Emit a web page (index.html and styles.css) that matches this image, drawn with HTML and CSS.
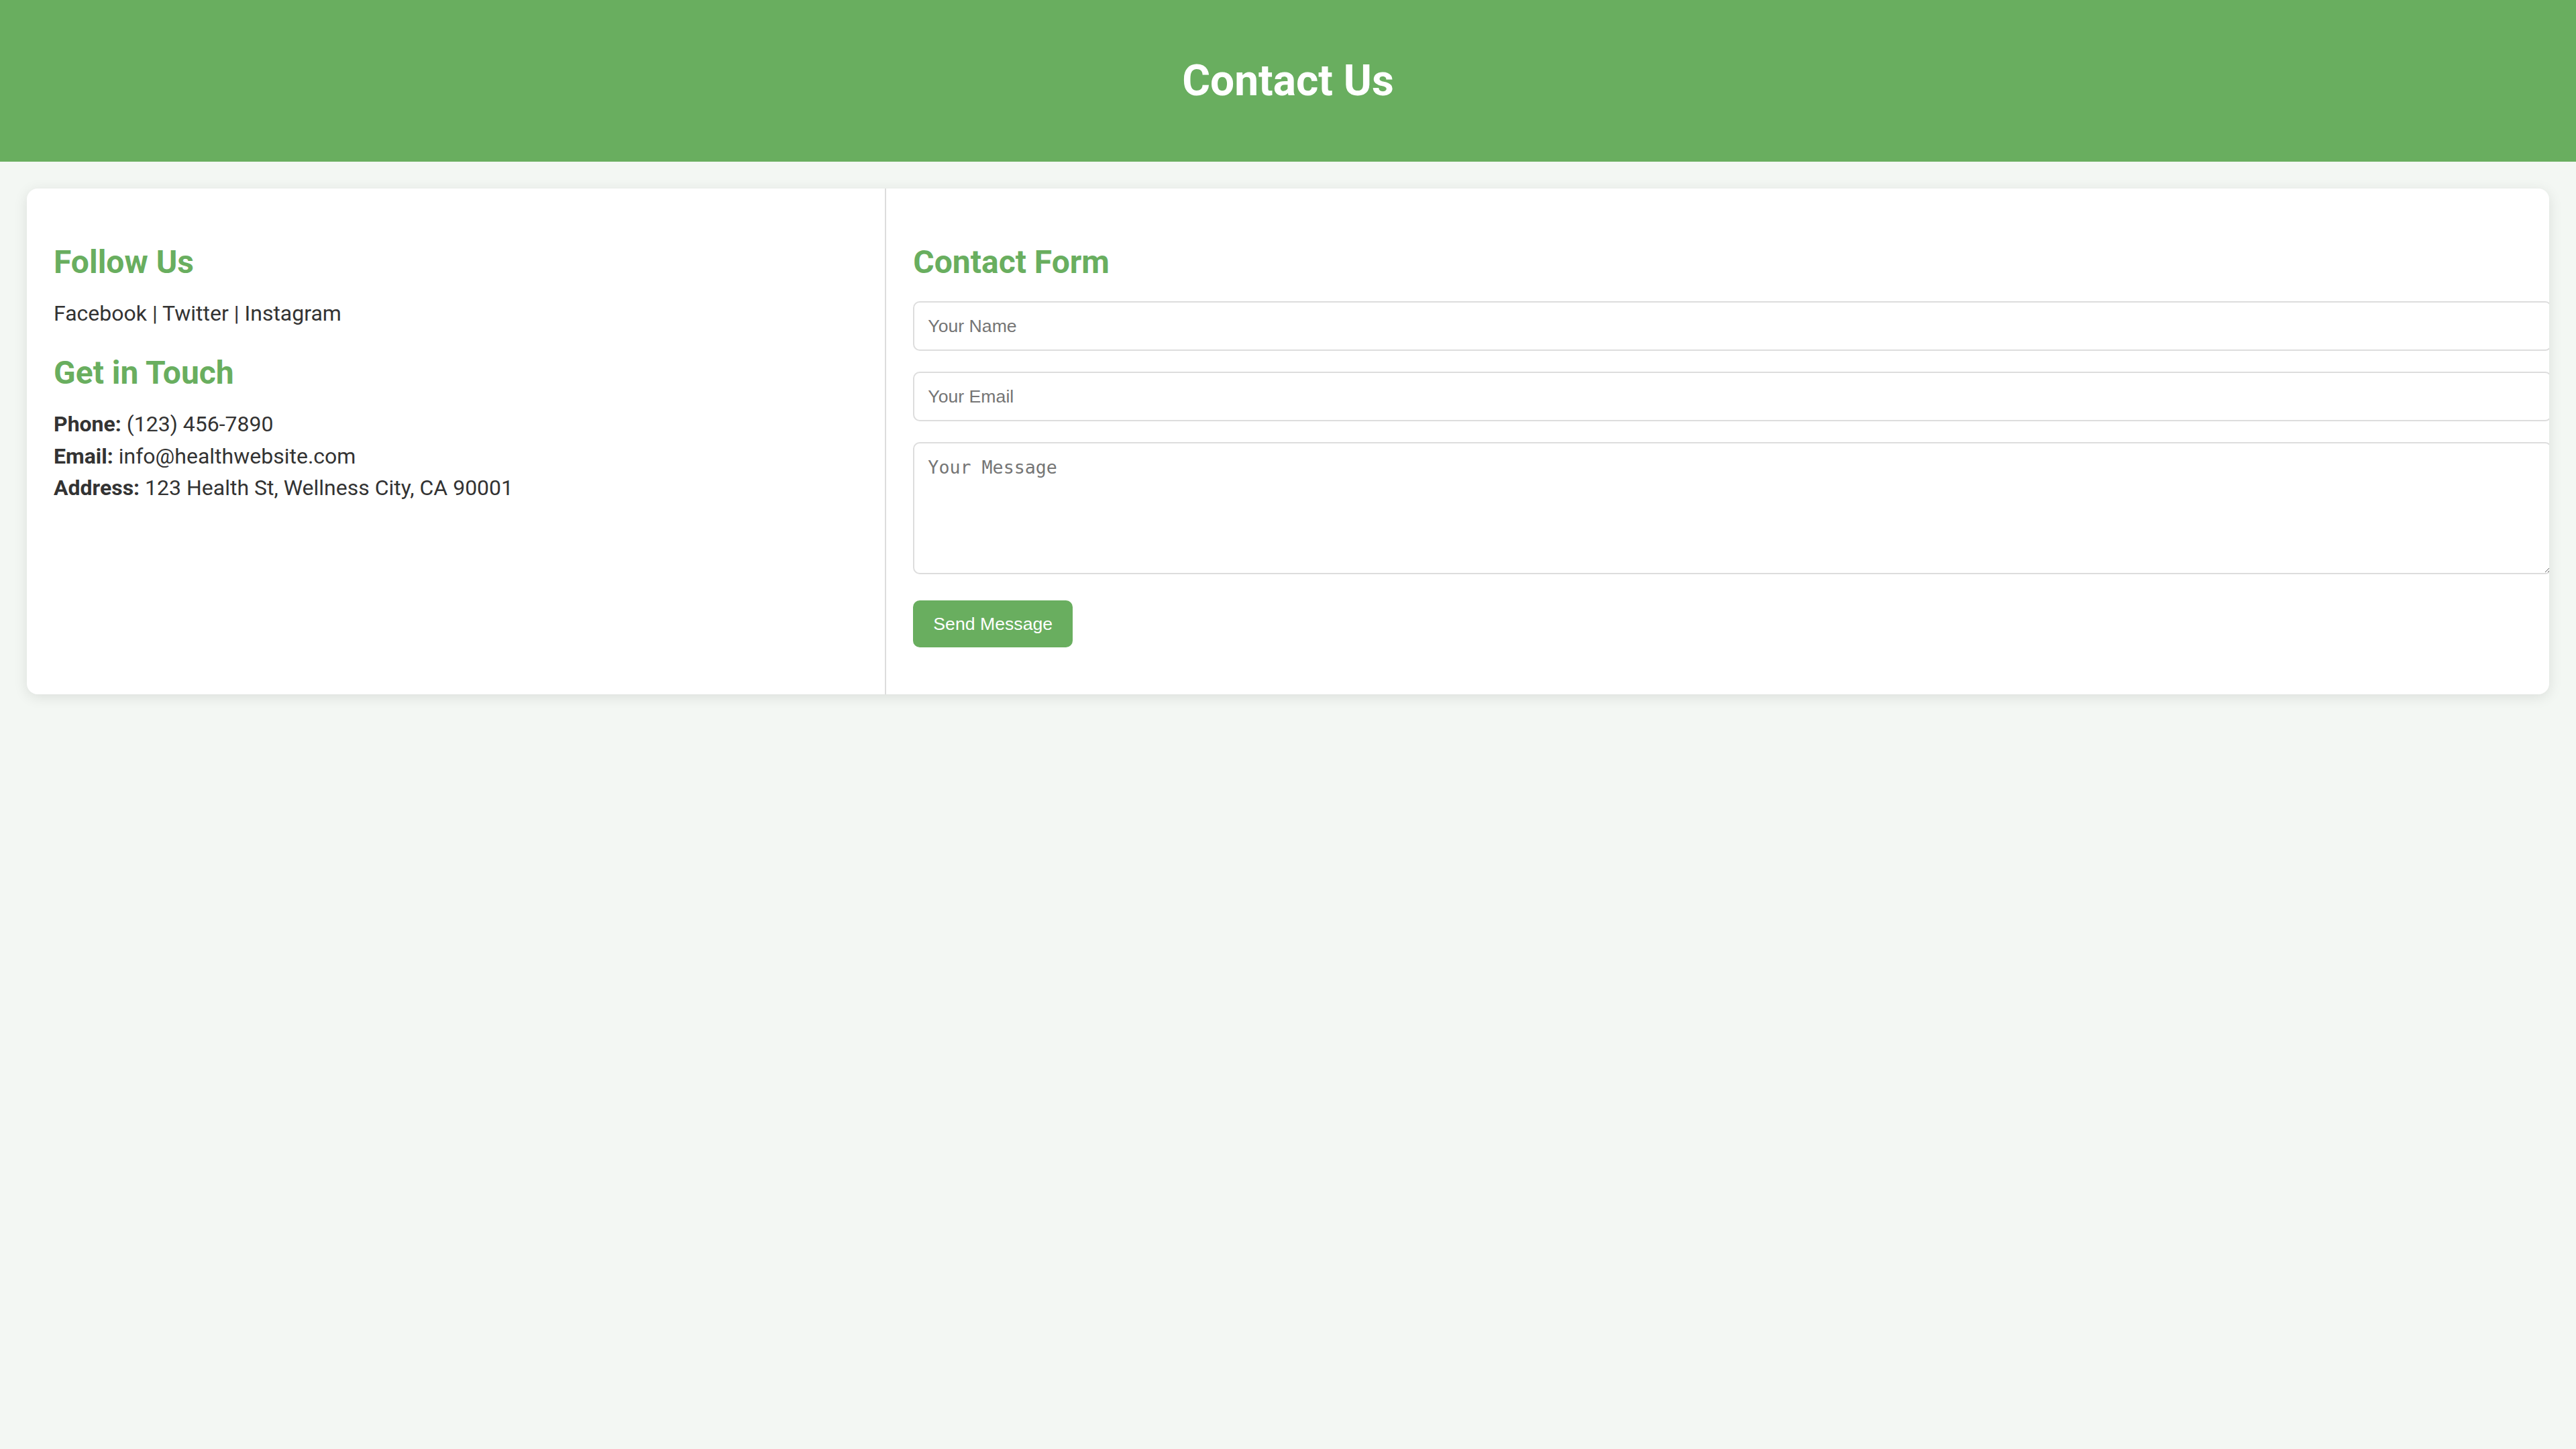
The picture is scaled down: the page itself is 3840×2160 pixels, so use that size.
FILE: index.html
```html
<!DOCTYPE html>
<html lang="en">
<head>
<meta charset="utf-8">
<title>Contact Us</title>
<link rel="stylesheet" href="styles.css">
</head>
<body>
<header class="site-header">
  <h1 class="site-title">Contact Us</h1>
</header>
<main class="container">
  <div class="contact-card">
    <section class="contact-info">
      <h2 class="section-title">Follow Us</h2>
      <p class="info-line">Facebook | Twitter | Instagram</p>
      <h2 class="section-title">Get in Touch</h2>
      <p class="info-line"><strong>Phone:</strong> (123) 456-7890</p>
      <p class="info-line"><strong>Email:</strong> info@healthwebsite.com</p>
      <p class="info-line"><strong>Address:</strong> 123 Health St, Wellness City, CA 90001</p>
    </section>
    <section class="contact-form">
      <h2 class="section-title">Contact Form</h2>
      <form class="form">
        <input class="field" type="text" placeholder="Your Name">
        <input class="field" type="email" placeholder="Your Email">
        <textarea class="field field-message" placeholder="Your Message"></textarea>
        <button class="send-btn" type="submit">Send Message</button>
      </form>
    </section>
  </div>
</main>
</body>
</html>
```

FILE: styles.css
```css
html, body {
  margin: 0;
  padding: 0;
}

body {
  background: #f3f7f3;
  font-family: Roboto, "Liberation Sans", sans-serif;
  font-size: 32px;
  line-height: 37.5px;
  color: #333333;
}

.site-header {
  background: #69ae5f;
  padding: 40px;
  text-align: center;
}

.site-title {
  margin: 42.88px 0;
  font-size: 64px;
  font-weight: 700;
  line-height: 75px;
  color: #ffffff;
}

.container {
  padding: 40px;
}

.contact-card {
  display: flex;
  background: #ffffff;
  border-radius: 16px;
  box-shadow: 0 4px 20px rgba(0, 0, 0, 0.1);
  overflow: hidden;
}

.contact-info {
  flex: 1 1 0;
  padding: 40px;
  border-right: 2px solid #dddddd;
}

.contact-form {
  flex: 2 1 0;
  padding: 40px;
  min-width: 0;
}

.section-title {
  margin: 42px 0 30px;
  font-size: 48px;
  font-weight: 700;
  line-height: 56px;
  color: #69ae5f;
}

.info-line {
  margin: 10px 0;
  line-height: 37.5px;
}

.info-line strong {
  font-weight: 700;
}

.form {
  margin: 0;
}

.field {
  display: block;
  width: 100%;
  padding: 20px;
  margin: 0 0 31px;
  border: 2px solid #dddddd;
  border-radius: 10px;
  background: #ffffff;
  font-family: "Liberation Sans", Arial, sans-serif;
  font-size: 26.667px;
  line-height: 30px;
  color: #333333;
}

.field::placeholder {
  color: #757575;
}

.field-message {
  height: 153px;
  margin-bottom: 39px;
  font-family: "DejaVu Sans Mono", "Liberation Mono", monospace;
  line-height: 31px;
  resize: both;
}

.send-btn {
  display: block;
  margin: 0 0 30px;
  padding: 20px 30px;
  border: none;
  border-radius: 10px;
  background: #69ae5f;
  color: #ffffff;
  font-family: "Liberation Sans", Arial, sans-serif;
  font-size: 26.667px;
  line-height: 30px;
  cursor: pointer;
}
```
